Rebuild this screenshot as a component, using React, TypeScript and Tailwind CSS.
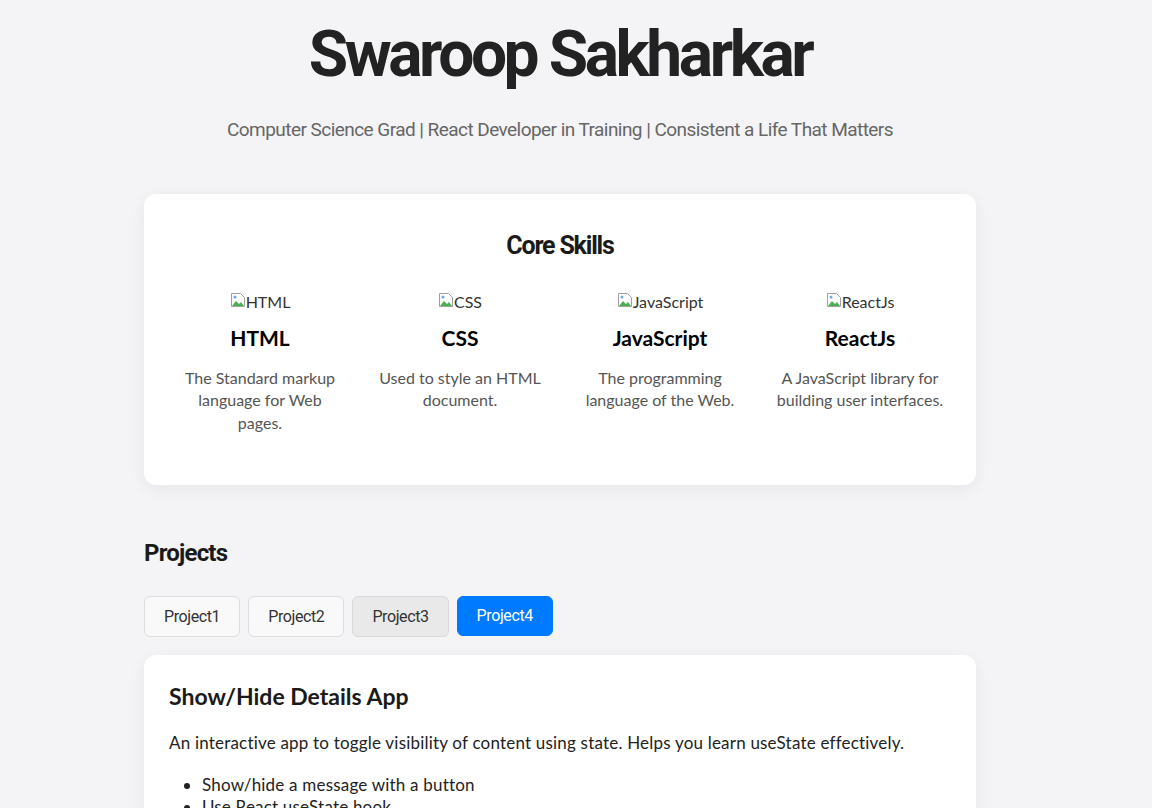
import { useState } from 'react';

const skills = [
  { name: 'HTML', desc: 'The Standard markup language for Web pages.' },
  { name: 'CSS', desc: 'Used to style an HTML document.' },
  { name: 'JavaScript', desc: 'The programming language of the Web.' },
  { name: 'ReactJs', desc: 'A JavaScript library for building user interfaces.' },
];

const projects = ['Project1', 'Project2', 'Project3', 'Project4'];

const BrokenImage = () => (
  <svg width="16" height="16" viewBox="0 0 16 16" className="inline-block align-top">
    <path d="M1.5 1.5h9l4 4v9h-13z" fill="#fff" stroke="#a0a0a0" />
    <path d="M2 14l4-5 3 3 2-2 3 4z" fill="#4caf50" />
    <circle cx="5" cy="5" r="1.5" fill="#6fa8dc" />
  </svg>
);

const App = () => {
  const [active, setActive] = useState(3);

  return (
    <div className="min-h-screen bg-[#f4f4f6] pb-10 pr-[32px]" style={{ fontFamily: 'Lato, sans-serif' }}>
      {/* Header */}
      <header className="text-center pt-[14px]">
        <h1 className="text-[64px] leading-[82px] font-bold text-[#222] tracking-[-3.4px] font-['Roboto',sans-serif]">
          Swaroop Sakharkar
        </h1>
        <p className="mt-[20px] text-[19px] text-[#666] tracking-[-0.55px] font-['Roboto',sans-serif]">
          Computer Science Grad | React Developer in Training | Consistent a Life That Matters
        </p>
      </header>

      <main className="w-[832px] mx-auto mt-[49px]">
        {/* Core Skills */}
        <section className="bg-white rounded-xl shadow-[0_4px_16px_rgba(0,0,0,0.06)] px-4 pt-[33px] pb-[51px]">
          <h2 className="text-center text-[25px] font-bold text-[#1a1a1a] tracking-[-1.2px] font-['Roboto',sans-serif]">
            Core Skills
          </h2>
          <div className="grid grid-cols-4 mt-[28px]">
            {skills.map((s) => (
              <div key={s.name} className="text-center px-4">
                <div className="text-[16px] text-[#333] leading-[20px]">
                  <BrokenImage />
                  {s.name}
                </div>
                <h3 className="mt-[10px] text-[21px] font-bold text-black">{s.name}</h3>
                <p className="mt-[13px] text-[16px] leading-[22.5px] text-[#555]">{s.desc}</p>
              </div>
            ))}
          </div>
        </section>

        {/* Projects */}
        <section className="mt-[50px]">
          <h2 className="text-[24px] font-bold text-[#1a1a1a] tracking-[-0.8px] font-['Roboto',sans-serif]">Projects</h2>
          <div className="flex gap-2 mt-[25px]">
            {projects.map((p, i) => (
              <button
                key={p}
                onClick={() => setActive(i)}
                className={
                  i === active
                    ? 'h-[40px] px-[19px] rounded-md text-[16px] text-white bg-[#007bff] border border-[#007bff] font-[Roboto,sans-serif] tracking-[-0.4px]'
                    : i === 2
                    ? 'h-[41px] px-[19px] rounded-md text-[16px] text-[#333] bg-[#e9e9e9] border border-[#d8d8d8] font-[Roboto,sans-serif] tracking-[-0.4px]'
                    : 'h-[41px] px-[19px] rounded-md text-[16px] text-[#333] bg-[#f9f9f9] border border-[#ddd] font-[Roboto,sans-serif] tracking-[-0.4px]'
                }
              >
                {p}
              </button>
            ))}
          </div>

          <div className="mt-[18px] bg-white rounded-xl shadow-[0_4px_16px_rgba(0,0,0,0.06)] px-[25px] pt-[24px] pb-6">
            <h3 className="text-[23px] font-bold text-[#1a1a1a]">Show/Hide Details App</h3>
            <p className="mt-[16px] text-[17px] tracking-[0.2px] text-[#222]">
              An interactive app to toggle visibility of content using state. Helps you learn useState effectively.
            </p>
            <ul className="mt-[19px] list-disc pl-[33px] text-[17px] tracking-[0.2px] text-[#222] leading-[22px]">
              <li>Show/hide a message with a button</li>
              <li>Use React useState hook</li>
              <li>Conditional rendering in JSX</li>
            </ul>
          </div>
        </section>
      </main>
    </div>
  );
};

export default App;
